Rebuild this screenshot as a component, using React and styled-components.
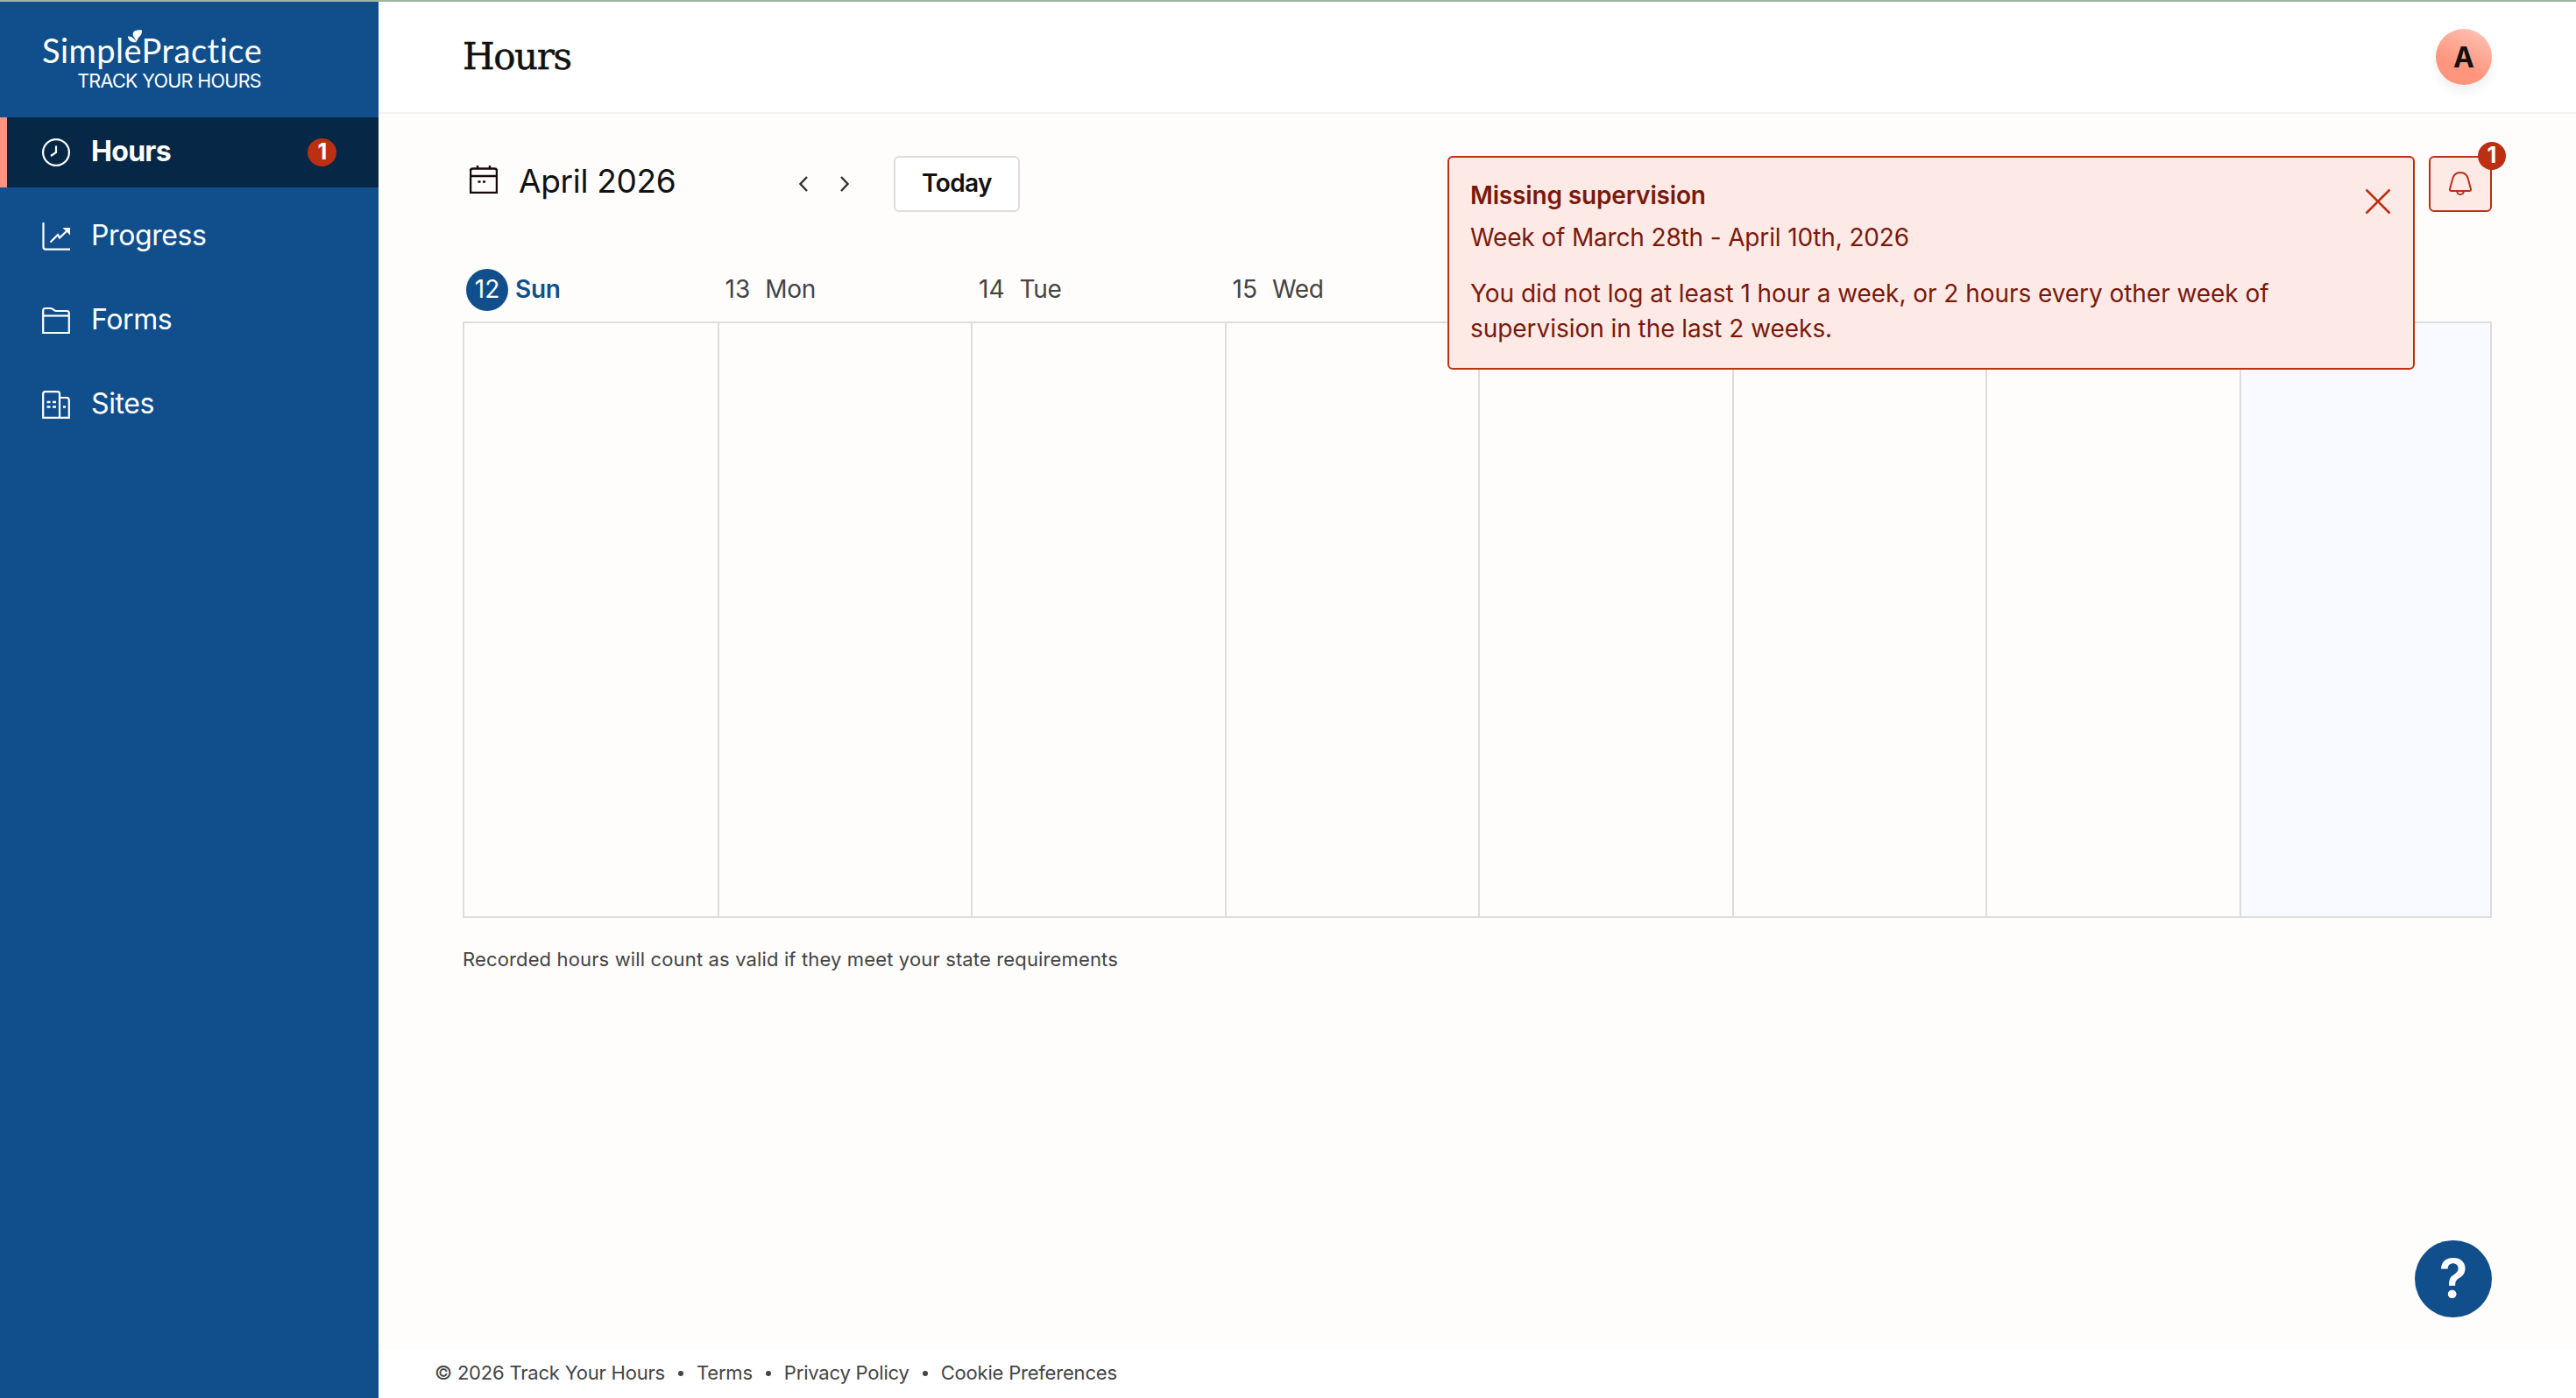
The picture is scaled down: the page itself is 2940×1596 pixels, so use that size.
import * as React from "react";
import styled, { createGlobalStyle } from "styled-components";

const navItems = [
  { title: "Hours", icon: "clock", count: 1 },
  { title: "Progress", icon: "chart" },
  { title: "Forms", icon: "folder" },
  { title: "Sites", icon: "building" },
];

const days = [
  { date: 12, name: "Sun", today: true },
  { date: 13, name: "Mon" },
  { date: 14, name: "Tue" },
  { date: 15, name: "Wed" },
];

const cells = [0, 1, 2, 3, 4, 5, 6, 7];

const footerLinks = ["Terms", "Privacy Policy", "Cookie Preferences"];

function NavIcon({ name }) {
  return (
    <NavSvg viewBox="0 0 32 32">
      {name === "clock" && (
        <>
          <circle cx="16" cy="16" r="14.9" />
          <path d="M16 8.5V16l-6 4" />
        </>
      )}
      {name === "chart" && (
        <>
          <path d="M1.5 0v28q0 2.7 2.7 2.7H32" />
          <path d="M9.5 22.5 18 14l2 3.5L29 9" />
          <path d="M23.5 6H32v8.5z" fill="currentColor" stroke="none" />
        </>
      )}
      {name === "folder" && (
        <>
          <path d="M1.200 30V4.500Q1.200 2 3.500 2h6q1.500 0 2.700 1l1.600 1.200q1 .8 2.500.8h12.200Q30.800 5 30.800 7.500V30z" />
          <path d="M1 10.500h30" />
        </>
      )}
      {name === "building" && (
        <>
          <path d="M1.200 30.800V3.500Q1.200 1.200 3.500 1.200h14Q20 1.200 20 3.500V30.800zM20 8h8q2.800 0 2.800 3v19.800H20" />
          <path d="M5.500 13h4M12 13h4M5.500 18.500h4M12 18.500h4M24 18.500h3" strokeWidth="2.600" />
        </>
      )}
    </NavSvg>
  );
}

function App() {
  return (
    <>
      <GlobalStyle />
      <Page>
        <Sidebar>
          <Logo>
            <Brand>SimplePractice</Brand>
            <Leaf viewBox="0 0 18 15">
              <path d="M10.500 13.500C9.500 9 6 8 6.800 4 7.500.5 12 0 16.800.3 17.500 5 15 7.500 13 9 12 10.500 12 12 10.500 13.500z" />
              <path d="M11 14.200C5 15 1 12 1 7.500c3.500 0 7 1.500 10 6.700z" />
            </Leaf>
            <Product>TRACK YOUR HOURS</Product>
          </Logo>
          <Nav>
            {navItems.map((item, index) => (
              <NavItem key={item.title} $active={index === 0}>
                <NavIcon name={item.icon} />
                <NavLabel>{item.title}</NavLabel>
                {item.count && <Badge>{item.count}</Badge>}
              </NavItem>
            ))}
          </Nav>
        </Sidebar>
        <Main>
          <Header>
            <Title>Hours</Title>
            <Avatar>A</Avatar>
          </Header>
          <Content>
            <Toolbar>
              <CalendarSvg viewBox="0 0 32 32">
                <path d="M1 31V6q0-2.500 2.500-2.500h25Q31 3.500 31 6v25zM1 12h30M9 0v4M23 0v4" />
                <path d="M9.500 18.500h3M15 18.500h3" />
              </CalendarSvg>
              <Month>April 2026</Month>
              <Arrow viewBox="0 0 12 20">
                <path d="m10 2-7.500 8 7.500 8" />
              </Arrow>
              <Arrow viewBox="0 0 12 20">
                <path d="m2 2 7.500 8L2 18" />
              </Arrow>
              <TodayButton>Today</TodayButton>
              <BellButton>
                <BellSvg viewBox="0 0 26 27">
                  <path d="M3.800 9.500Q5.300 1 13 1t9.200 8.500L25 20q.2 2-1.800 2H2.800Q.8 22 1 20z" />
                  <path d="M9 22q.5 4 4 4t4-4" />
                </BellSvg>
                <BellBadge>1</BellBadge>
              </BellButton>
              <Notice>
                <NoticeTitle>Missing supervision</NoticeTitle>
                <NoticeWeek>Week of March 28th - April 10th, 2026</NoticeWeek>
                <NoticeText>
                  You did not log at least 1 hour a week, or 2 hours every other week of
                  supervision in the last 2 weeks.
                </NoticeText>
                <Close viewBox="0 0 30 30">
                  <path d="m1.500 1.500 27 27M28.500 1.500l-27 27" />
                </Close>
              </Notice>
            </Toolbar>
            <DayRow>
              {days.map((day) => (
                <Day key={day.name} $today={day.today}>
                  <DayNumber $today={day.today}>{day.date}</DayNumber>
                  <DayName>{day.name}</DayName>
                </Day>
              ))}
            </DayRow>
            <Week>
              {cells.map((cell) => (
                <Cell key={cell} $total={cell === 7} />
              ))}
            </Week>
            <Note>Recorded hours will count as valid if they meet your state requirements</Note>
            <Help>?</Help>
          </Content>
          <Footer>
            <span>© 2026 Track Your Hours</span>
            {footerLinks.map((link) => (
              <React.Fragment key={link}>
                <Dot />
                <span>{link}</span>
              </React.Fragment>
            ))}
          </Footer>
        </Main>
      </Page>
    </>
  );
}

const GlobalStyle = createGlobalStyle`
  * {
    box-sizing: border-box;
  }
  body {
    margin: 0;
    font-family: Inter, "Liberation Sans", sans-serif;
    color: #111;
  }
`;

const Page = styled.div`
  display: flex;
  height: 1596px;
  overflow: hidden;
  border-top: 2px solid #a0b4a0;
  white-space: nowrap;
`;

const Sidebar = styled.aside`
  width: 432px;
  flex-shrink: 0;
  background: #104f8c;
  color: #fff;
`;

const Logo = styled.div`
  position: relative;
  display: flex;
  flex-direction: column;
  width: 298px;
  height: 132px;
  padding: 33px 0 0 48px;
`;

const Brand = styled.div`
  font: 400 38px/44px Lato, sans-serif;
  letter-spacing: 0.5px;
`;

const Leaf = styled.svg`
  position: absolute;
  left: 145px;
  top: 32px;
  width: 18px;
  height: 15px;
  fill: #fff;
`;

const Product = styled.div`
  align-self: flex-end;
  font-size: 21.5px;
  line-height: 22px;
  letter-spacing: -0.65px;
  margin-top: 2px;
`;

const Nav = styled.nav`
  display: flex;
  flex-direction: column;
  gap: 16px;
`;

const NavItem = styled.a`
  display: flex;
  align-items: center;
  height: 80px;
  padding: 0 48px 0 40px;
  border-left: 8px solid ${(props) => (props.$active ? "#ff957c" : "transparent")};
  background: ${(props) => (props.$active ? "#062745" : "transparent")};
  font-size: 32px;
  font-weight: ${(props) => (props.$active ? 700 : 400)};
  letter-spacing: ${(props) => (props.$active ? "-0.7px" : "-0.4px")};
`;

const NavSvg = styled.svg`
  width: 32px;
  height: 32px;
  fill: none;
  stroke: currentColor;
  stroke-width: 2.2;
`;

const NavLabel = styled.span`
  flex: 1;
  padding: 0 0 3px 24px;
`;

const Badge = styled.span`
  width: 33px;
  height: 32px;
  border-radius: 50%;
  background: #bb2f13;
  color: #fff;
  font-size: 25px;
  font-weight: 700;
  line-height: 30px;
  text-align: center;
`;

const Main = styled.main`
  display: flex;
  flex-direction: column;
  flex: 1;
  min-width: 0;
`;

const Header = styled.header`
  display: flex;
  align-items: center;
  justify-content: space-between;
  height: 128px;
  padding: 0 96px;
  border-bottom: 2px solid #f2f1ef;
`;

const Title = styled.h1`
  margin: 0;
  font: 400 42px/60px "DejaVu Serif", serif;
  letter-spacing: -1.4px;
  -webkit-text-stroke: 0.5px #111;
`;

const Avatar = styled.div`
  width: 64px;
  height: 64px;
  border-radius: 50%;
  background: linear-gradient(205deg, #ffbfb0 10%, #ff957c 65%);
  box-shadow: 0 8px 12px rgba(0, 0, 0, 0.06);
  font-size: 32px;
  font-weight: 700;
  line-height: 66px;
  text-align: center;
`;

const Content = styled.section`
  position: relative;
  flex: 1;
  padding: 48px 96px;
  background: #fefdfb;
`;

const Toolbar = styled.div`
  position: relative;
  display: flex;
  align-items: center;
  height: 64px;
`;

const CalendarSvg = styled.svg`
  width: 32px;
  height: 32px;
  margin: 0 24px 10px 8px;
  fill: none;
  stroke: #180808;
  stroke-width: 2.5;
`;

const Month = styled.div`
  width: 319px;
  padding-bottom: 8px;
  font-size: 37px;
  letter-spacing: -0.3px;
`;

const Arrow = styled.svg`
  width: 12px;
  height: 20px;
  margin: 0 35px 1px 0;
  fill: none;
  stroke: #333;
  stroke-width: 2.5;
`;

const TodayButton = styled.button`
  width: 144px;
  height: 64px;
  margin-left: 15px;
  padding: 0 0 3px;
  border: 2px solid #ddd;
  border-radius: 6px;
  background: #fff;
  color: #111;
  font: 600 28px Inter, sans-serif;
  letter-spacing: -0.6px;
`;

const BellButton = styled.div`
  position: relative;
  display: flex;
  align-items: center;
  justify-content: center;
  width: 72px;
  height: 64px;
  margin-left: auto;
  padding-bottom: 2px;
  border: 2px solid #bb2f13;
  border-radius: 6px;
  background: #fdeae7;
`;

const BellSvg = styled.svg`
  width: 26px;
  height: 27px;
  fill: none;
  stroke: #bb2f13;
  stroke-width: 2;
`;

const BellBadge = styled(Badge)`
  position: absolute;
  top: -18px;
  right: -18px;
  width: 32px;
`;

const Notice = styled.div`
  position: absolute;
  top: 0;
  right: 88px;
  z-index: 1;
  width: 1104px;
  height: 244px;
  padding: 23px 140px 0 24px;
  border: 2px solid #bb2f13;
  border-radius: 6px;
  background: #fdeae7;
  color: #7a190b;
  font-size: 28px;
  line-height: 40px;
  letter-spacing: -0.15px;
`;

const NoticeTitle = styled.div`
  font-weight: 600;
`;

const NoticeWeek = styled.div`
  margin-top: 8px;
`;

const NoticeText = styled.div`
  margin-top: 24px;
  letter-spacing: -0.05px;
  white-space: normal;
`;

const Close = styled.svg`
  position: absolute;
  top: 35px;
  right: 25px;
  width: 30px;
  height: 30px;
  stroke: #bb2f13;
  stroke-width: 2.5;
`;

const DayRow = styled.div`
  display: grid;
  grid-template-columns: repeat(8, 1fr);
  margin: 65px 0 12px;
`;

const Day = styled.div`
  display: flex;
  align-items: center;
  gap: ${(props) => (props.$today ? 8 : 17)}px;
  height: 48px;
  padding-left: ${(props) => (props.$today ? 4 : 10)}px;
  color: ${(props) => (props.$today ? "#104f8c" : "#444")};
  font-size: 28px;
  font-weight: ${(props) => (props.$today ? 600 : 400)};
`;

const DayNumber = styled.span`
  width: ${(props) => (props.$today ? "48px" : "auto")};
  height: 48px;
  border-radius: 50%;
  background: ${(props) => (props.$today ? "#104f8c" : "none")};
  color: ${(props) => (props.$today ? "#fff" : "inherit")};
  font-weight: 400;
  line-height: 46px;
  text-align: center;
`;

const DayName = styled.span`
  padding-bottom: 2px;
  letter-spacing: -0.3px;
`;

const Week = styled.div`
  display: grid;
  grid-template-columns: 290.5px repeat(6, 289.5px) 1fr;
  height: 681px;
  border: 2px solid #ddd;
  border-left: 0;
`;

const Cell = styled.div`
  border-left: 2px solid #ddd;
  background: ${(props) => (props.$total ? "#f8faff" : "transparent")};
`;

const Note = styled.p`
  margin: 33px 0 0;
  color: #444;
  font-size: 22px;
  line-height: 28px;
  letter-spacing: 0.14px;
`;

const Help = styled.div`
  position: absolute;
  right: 96px;
  bottom: 36px;
  width: 88px;
  height: 88px;
  border-radius: 50%;
  background: #104f8c;
  color: #fff;
  font-size: 60px;
  font-weight: 600;
  line-height: 86px;
  text-align: center;
`;

const Footer = styled.footer`
  display: flex;
  align-items: center;
  height: 56px;
  padding: 0 0 3px 64px;
  background: #fff;
  color: #444;
  font-size: 22px;
  letter-spacing: -0.2px;
`;

const Dot = styled.span`
  width: 6px;
  height: 6px;
  margin: 2px 15px 0;
  border-radius: 50%;
  background: #444;
`;

export default App;
